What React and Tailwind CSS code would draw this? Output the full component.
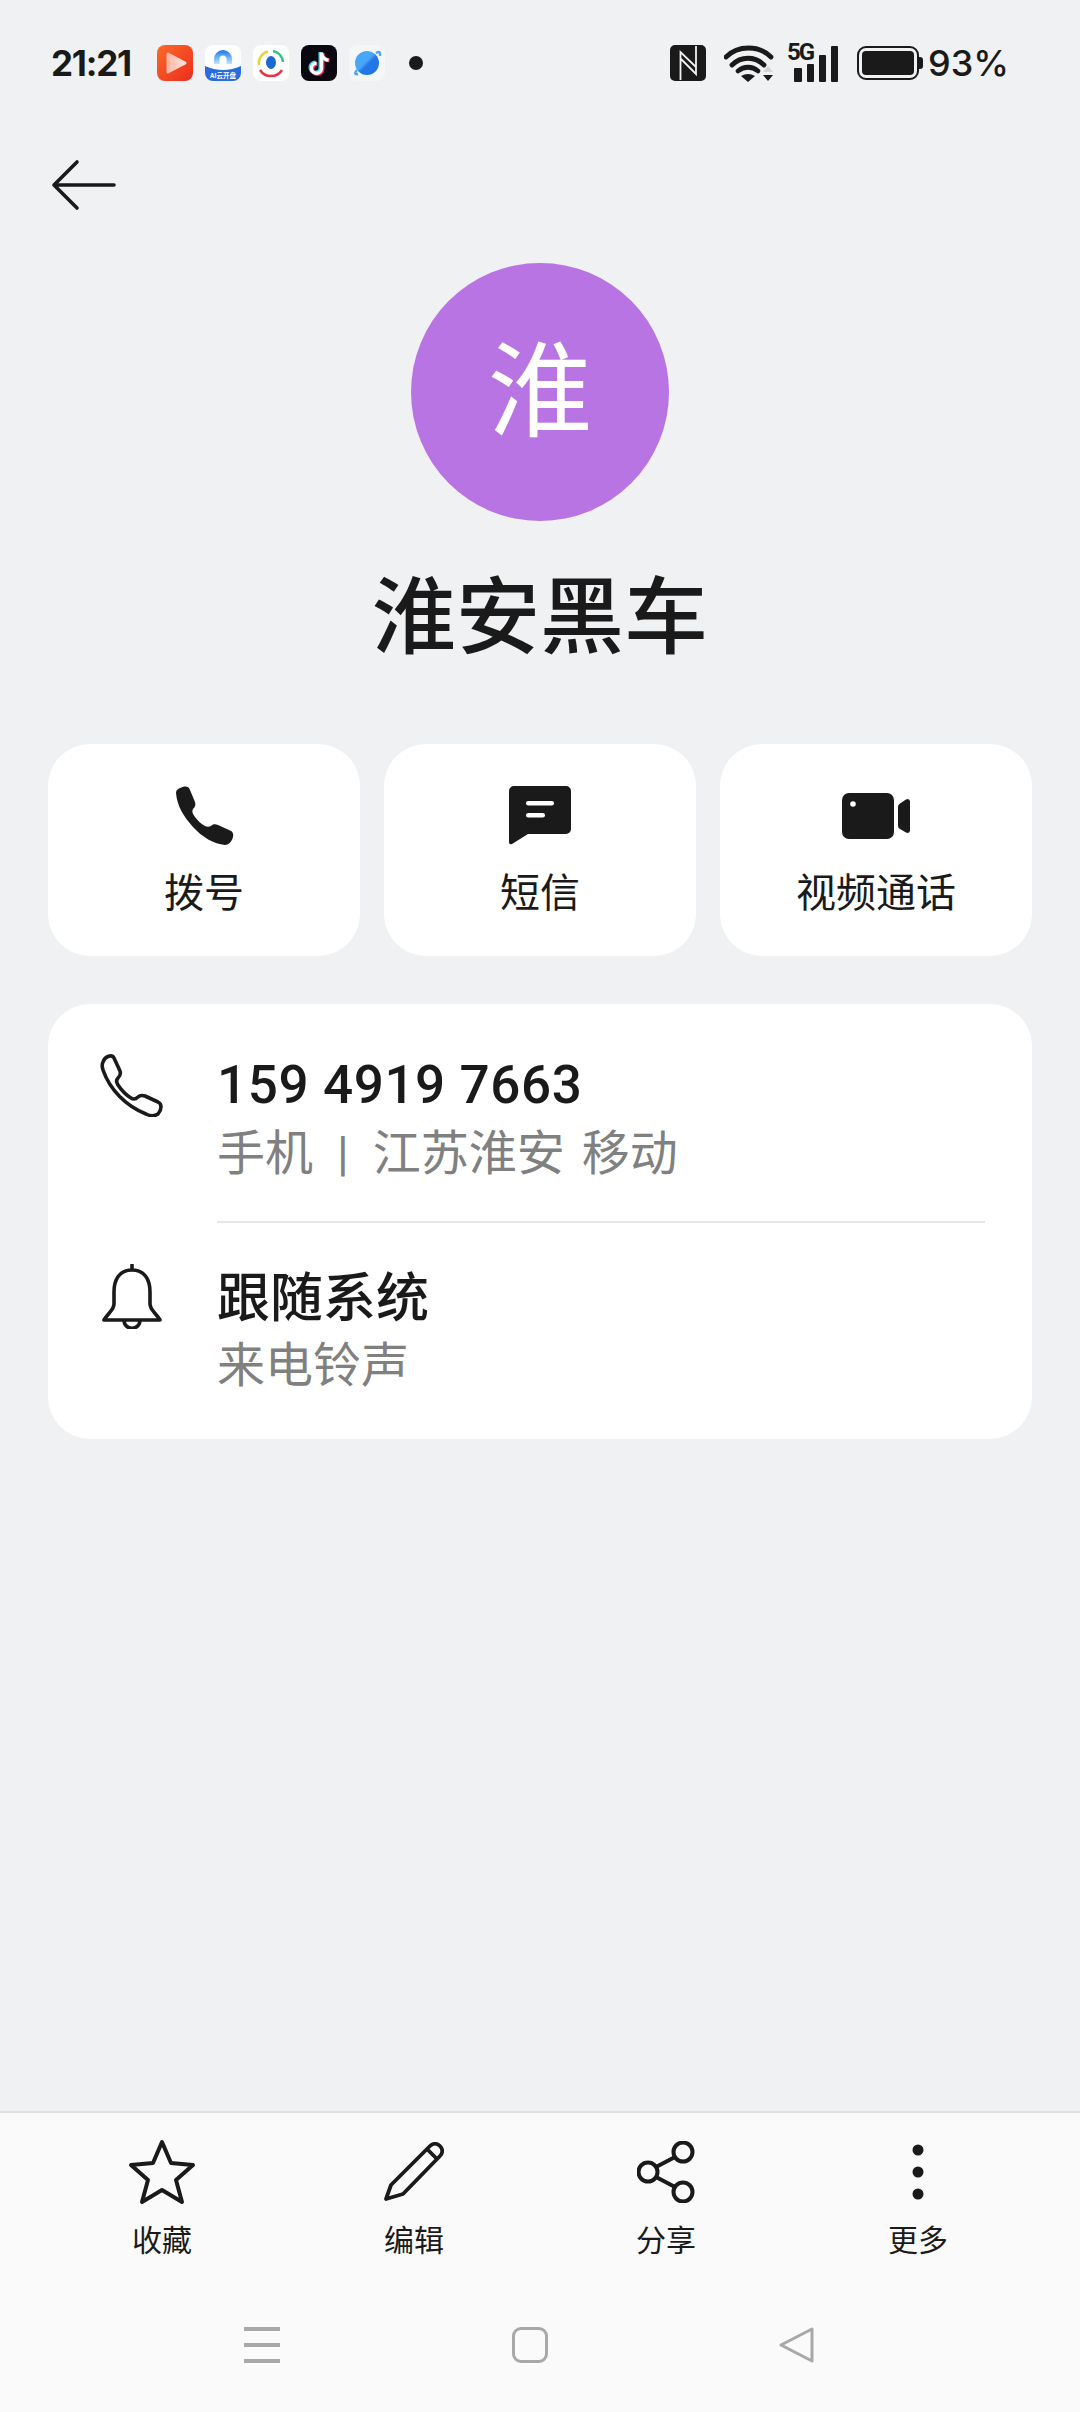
import { useState } from 'react'

const FONT = "font-['Roboto','Noto_Sans_CJK_SC',sans-serif]"

// Status bar app icons
function AppIcons() {
  return (
    <div className="flex items-center gap-[12px]">
      <svg width="36" height="36" viewBox="0 0 36 36">
        <defs>
          <linearGradient id="play" x1="0" y1="0" x2="1" y2="1">
            <stop offset="0" stopColor="#fb6a2a" />
            <stop offset="1" stopColor="#ec2c1e" />
          </linearGradient>
          <linearGradient id="playMark" x1="0" y1="0" x2="1" y2="0">
            <stop offset="0" stopColor="#ffb6a2" />
            <stop offset="1" stopColor="#ffe6de" />
          </linearGradient>
          <linearGradient id="arc" x1="0" y1="0" x2="0" y2="1">
            <stop offset="0" stopColor="#1477ee" />
            <stop offset="1" stopColor="#bfe3ff" />
          </linearGradient>
          <linearGradient id="planet" x1="0" y1="0" x2="1" y2="1">
            <stop offset="0.45" stopColor="#4aa6f8" />
            <stop offset="0.55" stopColor="#2277e8" />
          </linearGradient>
        </defs>
        <rect width="36" height="36" rx="8" fill="url(#play)" />
        <path d="M11 9 L28 18 L11 27 Z" fill="url(#playMark)" stroke="url(#playMark)" strokeWidth="3" strokeLinejoin="round" />
      </svg>
      <svg width="36" height="36" viewBox="0 0 36 36">
        <rect width="36" height="36" rx="8" fill="#fff" />
        <path d="M0 21 Q18 29 36 21 V28 a8 8 0 0 1 -8 8 H8 a8 8 0 0 1 -8 -8 Z" fill="#2a6cdc" />
        <path d="M9 19 V14 a9 9 0 0 1 18 0 V19 h-5.5 V14 a3.5 3.5 0 0 0 -7 0 V19 Z" fill="url(#arc)" />
        <text x="18" y="33" textAnchor="middle" fontSize="6.5" fontWeight="700" fill="#fff">AI云开盘</text>
      </svg>
      <svg width="36" height="36" viewBox="0 0 36 36">
        <rect width="36" height="36" rx="8" fill="#fff" />
        <path d="M6 20 A12 12 0 0 1 15 6.5" fill="none" stroke="#e8d13c" strokeWidth="2.5" />
        <path d="M20 6 A12 12 0 0 1 30 17" fill="none" stroke="#35c08e" strokeWidth="2.5" />
        <path d="M7 25 A13 13 0 0 0 29 25" fill="none" stroke="#e8344a" strokeWidth="2.5" />
        <ellipse cx="18" cy="17.5" rx="5" ry="6.5" fill="#1c67d8" />
      </svg>
      <svg width="36" height="36" viewBox="0 0 36 36">
        <rect width="36" height="36" rx="8" fill="#0b0710" />
        <path d="M19.5 7 V22.5 a5 5 0 1 1 -5 -5" fill="none" stroke="#25e0e0" strokeWidth="4" />
        <path d="M19.5 8 c0.5 4 3 6.5 7 7" fill="none" stroke="#25e0e0" strokeWidth="4" />
        <path d="M21.5 8 V24 a5 5 0 1 1 -5 -5" fill="none" stroke="#f02a55" strokeWidth="4" />
        <path d="M21.5 9 c0.5 4 3 6 7 6.5" fill="none" stroke="#f02a55" strokeWidth="4" />
        <path d="M20.5 7.5 V23.2 a5 5 0 1 1 -5 -5" fill="none" stroke="#fff" strokeWidth="3.4" />
        <path d="M20.5 8.5 c0.5 4 3 6.2 7 6.8" fill="none" stroke="#fff" strokeWidth="3.4" />
      </svg>
      <svg width="36" height="36" viewBox="0 0 36 36">
        <rect width="36" height="36" rx="8" fill="#f4f6f8" />
        <circle cx="18" cy="18" r="12" fill="url(#planet)" />
        <path d="M8 25 Q4 30 9 29" fill="none" stroke="#4aa6f8" strokeWidth="2.5" />
        <path d="M27 8 Q32 5 31 11" fill="none" stroke="#4aa6f8" strokeWidth="2.5" />
      </svg>
    </div>
  )
}

// Status bar system icons
function SystemIcons() {
  return (
    <div className="flex items-center">
      <svg width="36" height="36" viewBox="0 0 36 36">
        <rect width="36" height="36" rx="5" fill="#1a1a1a" />
        <path d="M10.5 35 V7 L26 22 M26 1 V29 L11 14" fill="none" stroke="#f0f1f3" strokeWidth="1.8" />
      </svg>
      <svg className="ml-[18px]" width="50" height="38" viewBox="0 0 50 38">
        <path d="M2 13 C14 1 35 1 47 13" fill="none" stroke="#1a1a1a" strokeWidth="4.8" strokeLinecap="round" />
        <path d="M8 21 C17 12 31 12 40 21" fill="none" stroke="#1a1a1a" strokeWidth="4.8" strokeLinecap="round" />
        <path d="M14 27 C20 22 28 22 34 27" fill="none" stroke="#1a1a1a" strokeWidth="4.8" strokeLinecap="round" />
        <path d="M24 38 L17 32 Q24 28 31 32 Z" fill="#1a1a1a" />
        <path d="M39 28 L44 22 L49 28 Z" fill="#d4d4d4" />
        <path d="M39 31 H49 L44 37 Z" fill="#1a1a1a" />
      </svg>
      <div className="relative ml-[13px] h-[38px] w-[53px]">
        <span className="absolute top-[-3px] left-0 font-['Roboto',sans-serif] text-[24px] leading-[22px] font-bold tracking-[-2px] text-[#1a1a1a]">5G</span>
        <div className="absolute bottom-0 left-[7px] flex items-end gap-[5px]">
          <div className="h-[14px] w-[8px] rounded-[1px] bg-[#1a1a1a]" />
          <div className="h-[18px] w-[7px] rounded-[1px] bg-[#1a1a1a]" />
          <div className="h-[27px] w-[7px] rounded-[1px] bg-[#1a1a1a]" />
          <div className="h-[36px] w-[7px] rounded-[1px] bg-[#1a1a1a]" />
        </div>
      </div>
      <div className="ml-[17px] flex items-center">
        <div className="flex h-[34px] w-[62px] items-center rounded-[9px] border-[2.5px] border-[#1a1a1a] p-[3px]">
          <div className="h-full w-full rounded-[4px] bg-[#1a1a1a]" />
        </div>
        <div className="h-[12px] w-[4px] rounded-r-[3px] bg-[#1a1a1a]" />
      </div>
      <span className="ml-[5px] font-['Inter',sans-serif] text-[36px] leading-[40px] font-medium text-[#1a1a1a]">93%</span>
    </div>
  )
}

function StatusBar() {
  return (
    <div className="flex h-[124px] items-center justify-between pt-[1px] pr-[71px] pl-[51px]">
      <div className="flex items-center">
        <span className="w-[106px] font-['Inter',sans-serif] text-[35px] leading-[40px] font-bold tracking-[-1.2px] text-[#1a1a1a]">21:21</span>
        <AppIcons />
        <div className="ml-[24px] h-[14px] w-[14px] rounded-full bg-[#1a1a1a]" />
      </div>
      <SystemIcons />
    </div>
  )
}

function ActionButton({ icon, label }) {
  return (
    <button className="flex h-[212px] flex-col items-center rounded-[42px] bg-white pt-[40px]">
      <div className="flex h-[64px] items-center justify-center">{icon}</div>
      <span className={`mt-[20px] ${FONT} text-[40px] leading-[52px] text-[#1a1a1a]`}>{label}</span>
    </button>
  )
}

function ToolbarItem({ icon, label }) {
  return (
    <div className="flex flex-col items-center">
      <div className="flex h-[66px] items-center justify-center">{icon}</div>
      <span className={`mt-[16px] ${FONT} text-[30px] leading-[40px] text-[#1a1a1a]`}>{label}</span>
    </div>
  )
}

export default function App() {
  const [name] = useState('淮安黑车')

  return (
    <div className={`flex h-[2412px] w-[1080px] flex-col overflow-hidden bg-[#f0f1f3] ${FONT}`}>
      <StatusBar />

      {/* Back arrow */}
      <div className="h-[139px] pl-[51px]">
        <svg width="66" height="52" viewBox="0 0 66 52" className="mt-[35px]">
          <path d="M3 26 H63 M26 3 L3 26 L26 49" fill="none" stroke="#1a1a1a" strokeWidth="3.6" strokeLinecap="round" strokeLinejoin="round" />
        </svg>
      </div>

      {/* Avatar and name */}
      <div className="flex flex-col items-center">
        <div className="flex h-[258px] w-[258px] items-center justify-center rounded-full bg-[#b974e3] pt-[3px]">
          <span className="text-[104px] leading-none text-white">淮</span>
        </div>
        <h1 className="mt-[46px] text-[84px] leading-[104px] font-medium text-[#1a1a1a]">{name}</h1>
      </div>

      {/* Call / message / video */}
      <div className="mt-[73px] grid grid-cols-3 gap-[24px] px-[48px]">
        <ActionButton
          label="拨号"
          icon={
            <svg width="60" height="60" viewBox="0 0 60 60">
              <path d="M2 7 C2 4 4 3 6 2 L10 0.5 C13 0 15 1 16 4 L21 16 C22 19 21 21 19 23 C18 25 18 27 21 31 C24 35 27 38 31 40 C33 41 35 41 37 40 C39 38 41 38 44 39 L55 44 C58 45 60 47 59 51 C58 55 55 59 51 59 C40 58 28 51 19 41 C9 30 3 19 2 7 Z" fill="#1a1a1a" />
            </svg>
          }
        />
        <ActionButton
          label="短信"
          icon={
            <svg width="62" height="60" viewBox="0 0 62 60">
              <path d="M5 0 H57 a5 5 0 0 1 5 5 V43 a5 5 0 0 1 -5 5 H19 L3 58 a2 2 0 0 1 -3 -1.5 V5 a5 5 0 0 1 5 -5 Z" fill="#1a1a1a" />
              <rect x="17" y="15" width="28" height="4.5" rx="2.25" fill="#fff" />
              <rect x="17" y="27" width="19" height="4.5" rx="2.25" fill="#fff" />
            </svg>
          }
        />
        <ActionButton
          label="视频通话"
          icon={
            <svg width="68" height="46" viewBox="0 0 68 46">
              <rect width="52" height="46" rx="7" fill="#1a1a1a" />
              <circle cx="11" cy="11" r="2.8" fill="#fff" />
              <path d="M56 14 a4 4 0 0 1 2 -3.5 L64 6.5 a3 3 0 0 1 4 1.5 V38 a3 3 0 0 1 -4 1.5 L58 36 a4 4 0 0 1 -2 -3.5 Z" fill="#1a1a1a" />
            </svg>
          }
        />
      </div>

      {/* Number and ringtone */}
      <div className="mx-[48px] mt-[48px] flex h-[435px] flex-col rounded-[42px] bg-white pr-[47px]">
        <div className="flex h-[217px] items-start">
          <div className="w-[169px] pt-[50px] pl-[52px]">
            <svg width="63" height="63" viewBox="0 0 63 63">
              <path d="M3 8 C5 2 12 0 14 4 L20 17 C21 20 20 22 18 24 C16 26 16 28 18 31 C22 37 26 41 31 44 C34 46 36 45 38 43 C40 41 42 41 45 42 L58 48 C62 50 62 55 58 60 C55 62 50 62 46 60 C26 52 10 36 3 16 C2 13 2 10 3 8 Z" fill="none" stroke="#1a1a1a" strokeWidth="3.6" strokeLinejoin="round" />
            </svg>
          </div>
          <div className="flex flex-1 flex-col pt-[50px]">
            <span className="text-[53px] leading-[62px] font-medium tracking-[0.6px] text-[#1a1a1a]">159 4919 7663</span>
            <span className="mt-[7px] text-[48px] leading-[62px] text-[#808080]">
              手机<span className="mx-[24px]">|</span>江苏淮安<span className="ml-[17px]">移动</span>
            </span>
          </div>
        </div>
        <div className="ml-[169px] h-[2px] bg-[#e6e6e6]" />
        <div className="flex flex-1 items-start">
          <div className="w-[169px] pt-[41px] pl-[54px]">
            <svg width="60" height="65" viewBox="0 0 60 65">
              <path d="M30 1 V6 M30 6 C17 6 12 16 12 28 V40 C12 46 6 49 2 56 H58 C54 49 48 46 48 40 V28 C48 16 43 6 30 6 Z M22 56 C22 67 38 67 38 56" fill="none" stroke="#1a1a1a" strokeWidth="3.6" strokeLinejoin="round" strokeLinecap="round" />
            </svg>
          </div>
          <div className="flex flex-1 flex-col pt-[45px]">
            <span className="text-[53px] leading-[62px] font-medium text-[#1a1a1a]">跟随系统</span>
            <span className="mt-[5px] text-[48px] leading-[62px] text-[#808080]">来电铃声</span>
          </div>
        </div>
      </div>

      {/* Bottom toolbar */}
      <div className="mt-auto flex h-[301px] flex-col border-t-[2px] border-[#e0e0e0] bg-[#fafafa]">
        <div className="grid grid-cols-4 px-[36px] pt-[26px]">
          <ToolbarItem
            label="收藏"
            icon={
              <svg width="68" height="66" viewBox="0 0 68 66">
                <path d="M34 3 L43 24 L65 26 L48 41 L54 63 L34 51 L14 63 L20 41 L3 26 L25 24 Z" fill="none" stroke="#1a1a1a" strokeWidth="4" strokeLinejoin="round" />
              </svg>
            }
          />
          <ToolbarItem
            label="编辑"
            icon={
              <svg width="60" height="60" viewBox="0 0 60 60">
                <path d="M2 57 L7 43 L46 4 C49 1 53 1 56 4 C59 7 59 11 56 14 L19 52 Z M43 7 L53 17" fill="none" stroke="#1a1a1a" strokeWidth="3.8" strokeLinejoin="round" />
              </svg>
            }
          />
          <ToolbarItem
            label="分享"
            icon={
              <svg width="58" height="62" viewBox="0 0 58 62">
                <circle cx="46" cy="11" r="9.5" fill="none" stroke="#1a1a1a" strokeWidth="4" />
                <circle cx="11" cy="31" r="9.5" fill="none" stroke="#1a1a1a" strokeWidth="4" />
                <circle cx="46" cy="51" r="9.5" fill="none" stroke="#1a1a1a" strokeWidth="4" />
                <path d="M19 26 L38 16 M19 36 L38 46" fill="none" stroke="#1a1a1a" strokeWidth="4" />
              </svg>
            }
          />
          <ToolbarItem
            label="更多"
            icon={
              <svg width="12" height="56" viewBox="0 0 12 56">
                <circle cx="6" cy="6" r="5.5" fill="#1a1a1a" />
                <circle cx="6" cy="28" r="5.5" fill="#1a1a1a" />
                <circle cx="6" cy="50" r="5.5" fill="#1a1a1a" />
              </svg>
            }
          />
        </div>

        {/* Navigation bar */}
        <div className="mt-[66px] flex items-center pl-[244px]">
          <div className="flex h-[36px] w-[36px] flex-col justify-between">
            <div className="h-[4px] bg-[#a8a8a8]" />
            <div className="h-[4px] bg-[#a8a8a8]" />
            <div className="h-[4px] bg-[#a8a8a8]" />
          </div>
          <div className="ml-[232px] h-[36px] w-[36px] rounded-[9px] border-[3px] border-[#a8a8a8]" />
          <svg className="ml-[231px]" width="36" height="36" viewBox="0 0 36 36">
            <path d="M2 18 L33 2 V34 Z" fill="none" stroke="#a8a8a8" strokeWidth="3" strokeLinejoin="round" />
          </svg>
        </div>
      </div>
    </div>
  )
}
